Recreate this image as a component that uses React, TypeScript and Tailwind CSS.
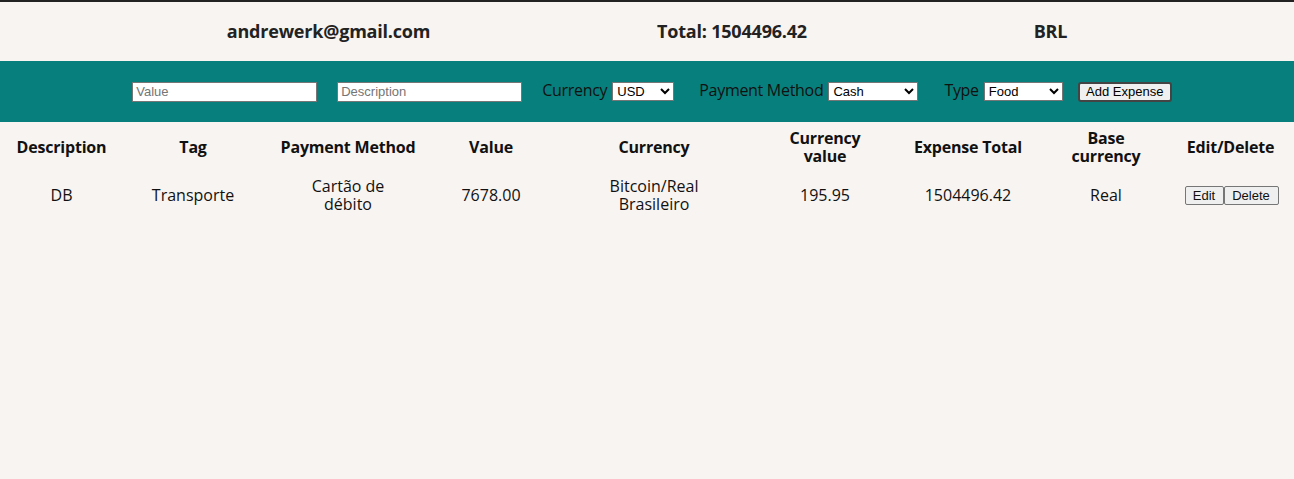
import React from "react";

const rows = [
  {
    description: "DB",
    tag: "Transporte",
    method: "Cartão de débito",
    value: "7678.00",
    currency: "Bitcoin/Real Brasileiro",
    rate: "195.95",
    total: "1504496.42",
    base: "Real",
  },
];

const headers = [
  "Description",
  "Tag",
  "Payment Method",
  "Value",
  "Currency",
  "Currency value",
  "Expense Total",
  "Base currency",
  "Edit/Delete",
];

const control =
  "bg-white border border-[#767676] text-[13px] font-['Liberation_Sans',sans-serif] text-black";

export default function App() {
  return (
    <div className="min-h-[479px] bg-[#f8f4f1] text-[#111] font-['Open_Sans',sans-serif]">
      {/* header */}
      <header className="h-[61px] border-t-2 border-[#222] flex items-center justify-evenly text-[18px] font-bold tracking-[-0.2px] text-[#222]">
        <p>andrewerk@gmail.com</p>
        <p>Total: 1504496.42</p>
        <p>BRL</p>
      </header>

      {/* form */}
      <form className="h-[61px] bg-[#077f7c] flex items-center justify-center pl-[10px] text-[16px] text-[#111]">
        <input
          type="text"
          placeholder="Value"
          className={`w-[185px] h-[20px] px-[3px] placeholder:text-[#757575] ${control}`}
        />
        <input
          type="text"
          placeholder="Description"
          className={`ml-[20px] w-[185px] h-[20px] px-[3px] placeholder:text-[#757575] ${control}`}
        />
        <label className="ml-[20px] flex items-center gap-[5px]">
          <span className="mb-[3px] tracking-[-0.3px]">Currency</span>
          <select className={`w-[62px] h-[19px] ${control}`}>
            <option>USD</option>
          </select>
        </label>
        <label className="ml-[25px] flex items-center gap-[5px]">
          <span className="mb-[3px] tracking-[-0.3px]">Payment Method</span>
          <select className={`w-[90px] h-[19px] ${control}`}>
            <option>Cash</option>
          </select>
        </label>
        <label className="ml-[26px] flex items-center gap-[5px]">
          <span className="mb-[3px] tracking-[-0.3px]">Type</span>
          <select className={`w-[79px] h-[19px] ${control}`}>
            <option>Food</option>
          </select>
        </label>
        <button
          type="button"
          className="ml-[15px] w-[94px] h-[20px] bg-[#f0f0f0] border-2 border-[#444] rounded-[3px] text-[13px] font-['Liberation_Sans',sans-serif] text-black leading-none"
        >
          Add Expense
        </button>
      </form>

      {/* table */}
      <table className="w-full table-fixed border-collapse mt-px text-[16px] leading-[18px] text-center">
        <colgroup>
          <col className="w-[123px]" />
          <col className="w-[140px]" />
          <col className="w-[170px]" />
          <col className="w-[116px]" />
          <col className="w-[210px]" />
          <col className="w-[132px]" />
          <col className="w-[154px]" />
          <col className="w-[122px]" />
          <col className="w-[127px]" />
        </colgroup>
        <thead>
          <tr className="tracking-[-0.2px]">
            {headers.map((h) => (
              <th key={h} className="py-[6px] font-bold">
                {h === "Currency value" ? (
                  <>
                    Currency
                    <br />
                    value
                  </>
                ) : h === "Base currency" ? (
                  <>
                    Base
                    <br />
                    currency
                  </>
                ) : (
                  h
                )}
              </th>
            ))}
          </tr>
        </thead>
        <tbody>
          {rows.map((r) => (
            <tr key={r.description}>
              <td className="py-[6px]">{r.description}</td>
              <td className="py-[6px]">{r.tag}</td>
              <td className="py-[6px]">
                Cartão de
                <br />
                débito
              </td>
              <td className="py-[6px]">{r.value}</td>
              <td className="py-[6px]">
                Bitcoin/Real
                <br />
                Brasileiro
              </td>
              <td className="py-[6px]">{r.rate}</td>
              <td className="py-[6px]">{r.total}</td>
              <td className="py-[6px]">{r.base}</td>
              <td className="py-[6px]">
                <div className="flex justify-center pl-[2px]">
                  <button
                    type="button"
                    className="w-[39px] h-[19px] bg-[#efefef] border border-[#767676] rounded-[2px] text-[13px] font-['Liberation_Sans',sans-serif] leading-none"
                  >
                    Edit
                  </button>
                  <button
                    type="button"
                    className="w-[55px] h-[19px] bg-[#efefef] border border-[#767676] rounded-[2px] text-[13px] font-['Liberation_Sans',sans-serif] leading-none"
                  >
                    Delete
                  </button>
                </div>
              </td>
            </tr>
          ))}
        </tbody>
      </table>
    </div>
  );
}
